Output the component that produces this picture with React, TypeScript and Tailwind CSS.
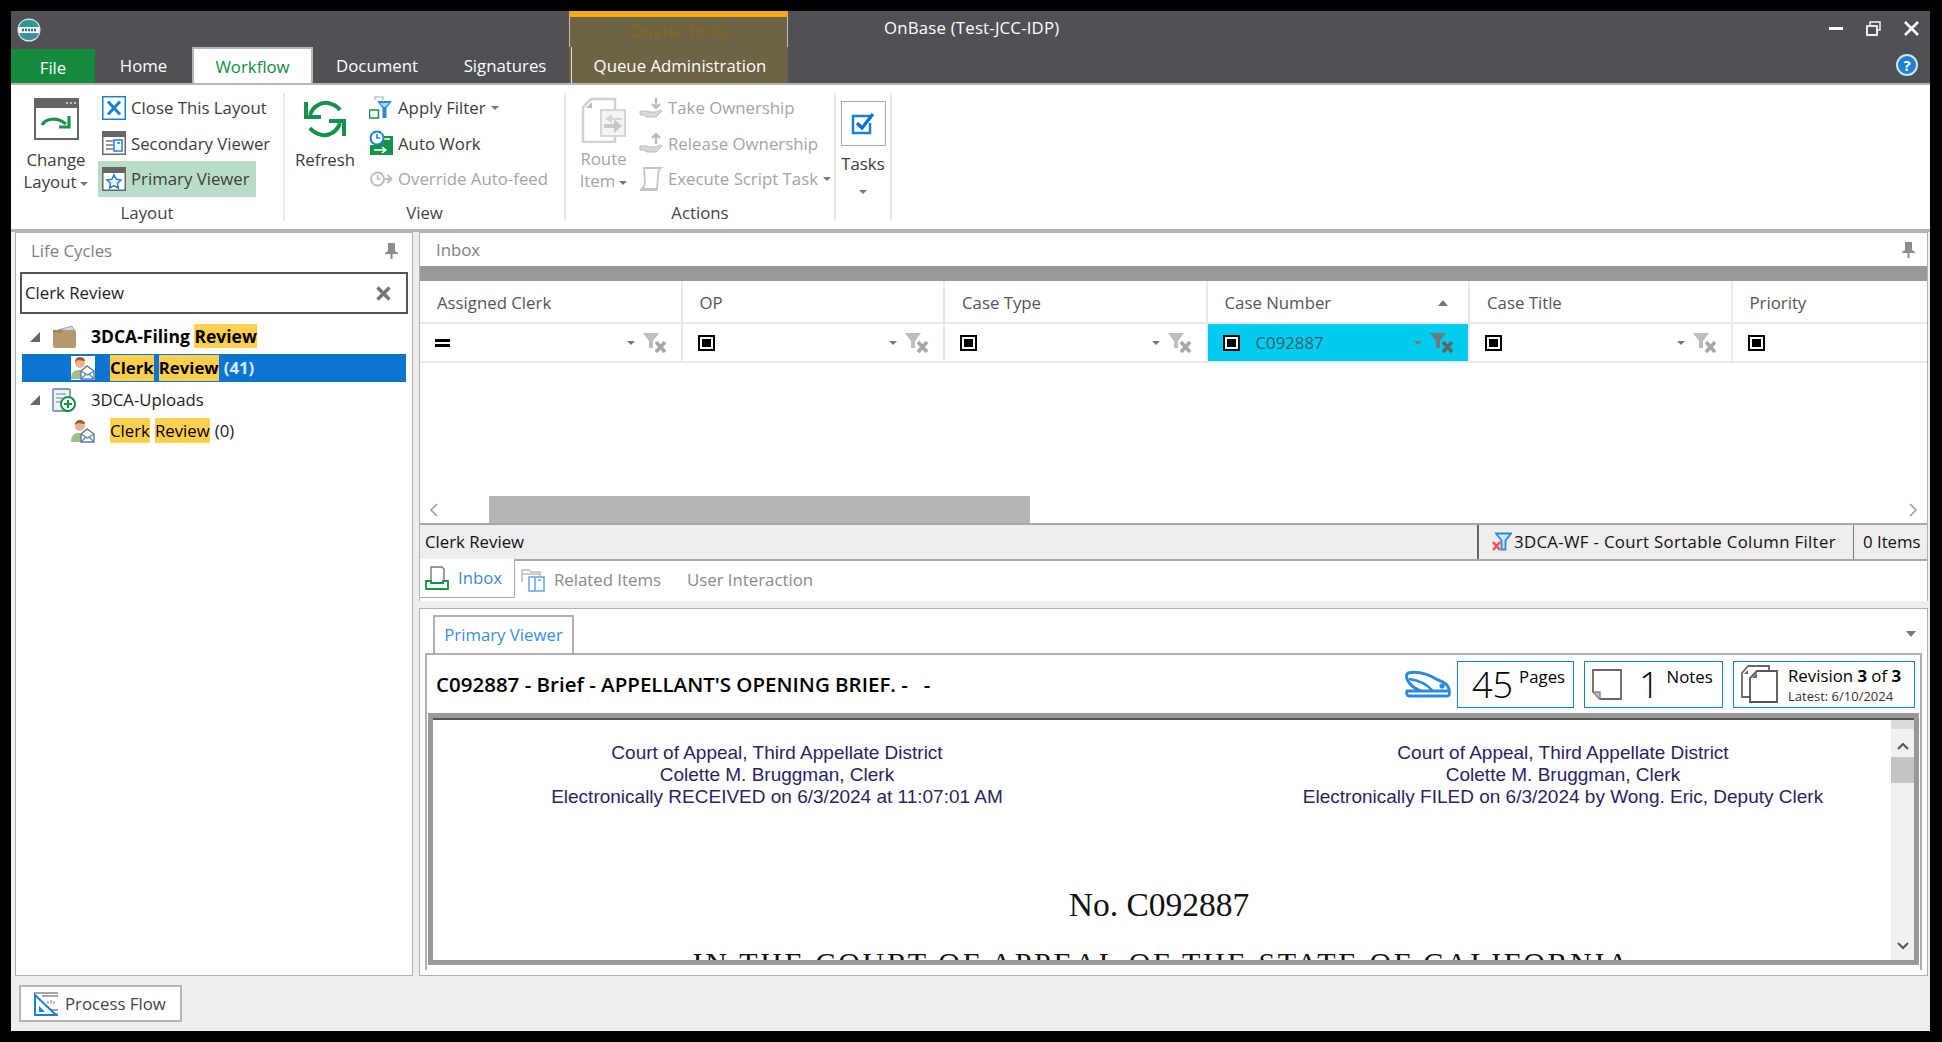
import type { ReactNode } from "react";

const ui = "font-['Open_Sans','Noto_Sans',sans-serif]";

function Caret({ className = "" }: { className?: string }) {
  return <span className={`inline-block w-0 h-0 border-x-[4px] border-x-transparent border-t-[4px] border-t-[#777] ${className}`} />;
}

function Logo() {
  return (
    <svg width="24" height="26" viewBox="0 0 24 26">
      <circle cx="12" cy="13" r="11.5" fill="#dfe9e6" />
      <path d="M2 10a10.5 10.5 0 0 1 20 0z" fill="#2e9c8c" />
      <path d="M2 16a10.5 10.5 0 0 0 20 0z" fill="#3f8f9f" />
      <rect x="2" y="10" width="20" height="6" fill="#f5f7f6" />
      <path d="M5 13h14" stroke="#2a6f86" strokeWidth="2.4" strokeDasharray="2 1" />
    </svg>
  );
}

function ChangeLayoutIcon() {
  return (
    <svg width="45" height="42" viewBox="0 0 45 42">
      <rect x="1" y="1" width="43" height="40" fill="#fff" stroke="#666" strokeWidth="2" />
      <rect x="1" y="1" width="43" height="9" fill="#666" />
      <path d="M32 5h2M36 5h2M40 5h2" stroke="#ddd" strokeWidth="1.5" />
      <path d="M8 27c4-7 15-8 24-1" fill="none" stroke="#17924a" strokeWidth="3.2" />
      <path d="M35 18v11H25" fill="none" stroke="#17924a" strokeWidth="3.2" />
    </svg>
  );
}

function CloseLayoutIcon() {
  return (
    <svg width="24" height="24" viewBox="0 0 24 24">
      <rect x="0.75" y="0.75" width="22.5" height="22.5" fill="#fff" stroke="#1a7fd6" strokeWidth="1.5" />
      <path d="M6 5.5l12 13M18 5.5l-12 13" stroke="#1a7fd6" strokeWidth="3" />
    </svg>
  );
}

function SecondaryIcon() {
  return (
    <svg width="24" height="24" viewBox="0 0 24 24">
      <rect x="0.75" y="0.75" width="22.5" height="22.5" fill="#fff" stroke="#666" strokeWidth="1.5" />
      <rect x="1" y="1" width="22" height="5" fill="#666" />
      <path d="M4 10h7M4 14h7M4 18h7" stroke="#999" strokeWidth="2" />
      <rect x="12" y="9" width="8" height="11" fill="#fff" stroke="#1a7fd6" strokeWidth="1.5" />
      <path d="M15 12h3" stroke="#1a7fd6" strokeWidth="1.5" />
    </svg>
  );
}

function PrimaryIcon() {
  return (
    <svg width="24" height="24" viewBox="0 0 24 24">
      <rect x="0.75" y="0.75" width="22.5" height="22.5" fill="#fff" stroke="#666" strokeWidth="1.5" />
      <rect x="1" y="1" width="22" height="5" fill="#666" />
      <path d="M12 8l2.2 4.3 4.8.7-3.5 3.3.9 4.7L12 18.700 7.600 21l.9-4.700L5 13l4.800-.7z" fill="#fff" stroke="#1a7fd6" strokeWidth="1.5" />
    </svg>
  );
}

function RefreshIcon() {
  return (
    <svg width="44" height="42" viewBox="0 0 44 42">
      <path d="M7 17C10 8 18 4 25 5c5 1 9 3 12 7" fill="none" stroke="#17924a" strokeWidth="4" />
      <path d="M3 4v15h15" fill="none" stroke="#17924a" strokeWidth="4" />
      <path d="M37 25c-3 9-11 13-18 12-5-1-9-3-12-7" fill="none" stroke="#17924a" strokeWidth="4" />
      <path d="M41 38V23H26" fill="none" stroke="#17924a" strokeWidth="4" />
    </svg>
  );
}

function ApplyFilterIcon() {
  return (
    <svg width="24" height="24" viewBox="0 0 24 24">
      <path d="M6 4V1h8v3" fill="none" stroke="#aaa" strokeWidth="1.200" />
      <rect x="0.500" y="14" width="9" height="8" fill="none" stroke="#17924a" strokeWidth="1.500" />
      <path d="M8 5h15l-5.500 7v10h-4V12z" fill="#2a8ade" />
      <path d="M11 7h9l-3.500 4h-2z" fill="#a9d3f5" />
    </svg>
  );
}

function AutoWorkIcon() {
  return (
    <svg width="24" height="26" viewBox="0 0 24 26">
      <rect x="10" y="6" width="14" height="10" fill="#17924a" />
      <rect x="1" y="15" width="23" height="10" fill="#17924a" />
      <path d="M5 20h12M13 17l4 3-4 3M15 9h6" stroke="#fff" strokeWidth="1.500" fill="none" />
      <circle cx="8" cy="8" r="6.500" fill="#fff" stroke="#1a7fd6" strokeWidth="2" />
      <path d="M8 4v4h3" stroke="#1a7fd6" strokeWidth="1.500" fill="none" />
    </svg>
  );
}

function OverrideIcon() {
  return (
    <svg width="24" height="24" viewBox="0 0 24 24">
      <circle cx="8.500" cy="12" r="6.500" fill="#fff" stroke="#bdbdbd" strokeWidth="2" />
      <path d="M8.500 8v4h3" stroke="#bdbdbd" strokeWidth="1.500" fill="none" />
      <path d="M16 12h5M18.500 8l4 4-4 4" stroke="#bdbdbd" strokeWidth="2" fill="none" />
    </svg>
  );
}

function RouteIcon() {
  return (
    <svg width="45" height="46" viewBox="0 0 45 46">
      <path d="M10 2h24v43H2V10z" fill="#fff" stroke="#d0d0d0" strokeWidth="2.500" />
      <path d="M5 11l6-6v6z" fill="#bbb" />
      <rect x="20" y="13" width="24" height="26" fill="#f4f4f4" stroke="#d6d6d6" strokeWidth="2" />
      <path d="M23 27h10v-5l8 7-8 7v-5H23z" fill="#c8c8c8" />
      <path d="M41 21H31v-4l-7 5 7 4v-3h10z" fill="#d4d4d4" />
    </svg>
  );
}

function HandIcon({ up }: { up?: boolean }) {
  return (
    <svg width="24" height="24" viewBox="0 0 24 24">
      <path d="M1 15h6l4 1h6l4-2 2 1-6 6H8l-3-2H1z" fill="#d8d8d8" stroke="#bdbdbd" />
      <path d={up ? "M17 13V4M13 7l4-4 4 4" : "M17 2v10M13 8l4 4 4-4"} stroke="#bdbdbd" strokeWidth="2.400" fill="none" />
    </svg>
  );
}

function ScriptIcon() {
  return (
    <svg width="24" height="26" viewBox="0 0 24 26">
      <path d="M5 2h17c-3 2-3 5-3 8l-1 13H3c2-2 3-4 3-7z" fill="#fff" stroke="#c4c4c4" strokeWidth="1.800" />
      <path d="M1 24h17" stroke="#c4c4c4" strokeWidth="2" />
    </svg>
  );
}

function TasksIcon() {
  return (
    <svg width="24" height="24" viewBox="0 0 24 24">
      <path d="M19 11v10H2V4h17" fill="none" stroke="#1a7fd6" strokeWidth="2.500" />
      <path d="M6 11l5 5 11-14" fill="none" stroke="#0f6fc4" strokeWidth="3.200" />
    </svg>
  );
}

function PinIcon() {
  return (
    <svg width="13" height="16" viewBox="0 0 13 16">
      <path d="M3 0h7v8l3 2v1H0v-1l3-2z" fill="#8c8c8c" />
      <rect x="5.500" y="11" width="2" height="5" fill="#8c8c8c" />
    </svg>
  );
}

function FolderIcon() {
  return (
    <svg width="25" height="24" viewBox="0 0 25 24">
      <path d="M6 5l14-4 3 5z" fill="#cfd8e6" stroke="#8fa5c0" />
      <rect x="1" y="5" width="23" height="18" rx="2" fill="#b49a6a" />
      <rect x="1" y="5" width="9" height="3" fill="#a08656" />
    </svg>
  );
}

function ClerkIcon({ solid }: { solid?: boolean }) {
  return (
    <svg width="24" height="24" viewBox="0 0 24 24">
      {solid && <rect width="24" height="24" fill="#fff" />}
      <path d="M0 23c0-6 3-9 7-9s6 2 7 5l-3 4z" fill="#9fc089" />
      <circle cx="9" cy="7" r="5" fill="#e8b48e" />
      <path d="M4 6c0-4 3-5 5-5s5 1 5 4c-3 0-6-1-7-1z" fill="#a5552e" />
      <path d="M10 15l6-5 7 5v8H10z" fill="#fff" stroke="#5d7d99" strokeWidth="1.400" />
      <path d="M10 15l6.500 4 6.500-4M10 23l5-5M23 23l-5-5" fill="none" stroke="#5d7d99" strokeWidth="1.200" />
    </svg>
  );
}

function UploadsIcon() {
  return (
    <svg width="24" height="24" viewBox="0 0 24 24">
      <rect x="1" y="1" width="17" height="22" rx="1" fill="#eef3f8" stroke="#5d7d99" strokeWidth="1.400" />
      <path d="M4 6h10M4 10h6M4 14h5" stroke="#9ab" strokeWidth="1.300" />
      <circle cx="16" cy="16" r="7" fill="#fff" stroke="#17924a" strokeWidth="2" />
      <path d="M16 12v8M12 16h8" stroke="#17924a" strokeWidth="2.200" />
    </svg>
  );
}

function FunnelClear({ dark }: { dark?: boolean }) {
  const c = dark ? "#6e7a80" : "#bdbdbd";
  const x = dark ? "#5c666b" : "#a8a8a8";
  return (
    <svg width="25" height="22" viewBox="0 0 25 22">
      <path d="M0 1h16l-6 8v7H6V9z" fill={c} />
      <path d="M13 10l9 10M22 10l-9 10" stroke={x} strokeWidth="3.600" />
    </svg>
  );
}

function FilterBox() {
  return (
    <span className="block w-[17px] h-[16px] border-2 border-black p-[2px] bg-white">
      <span className="block w-full h-full bg-black" />
    </span>
  );
}

function RedFunnelIcon() {
  return (
    <svg width="20" height="20" viewBox="0 0 20 20">
      <path d="M4 1.500h15l-5.500 7v9h-4v-9z" fill="#cfe6fa" stroke="#2a8ade" strokeWidth="1.800" />
      <path d="M1 10l7 8M8 10l-7 8" stroke="#ef5350" strokeWidth="2.600" />
    </svg>
  );
}

function InboxIcon() {
  return (
    <svg width="24" height="24" viewBox="0 0 24 24">
      <path d="M6 15V1h11l2 2v12" fill="#fff" stroke="#777" strokeWidth="1.400" />
      <path d="M1 15h5v2h12v-2h5v8H1z" fill="#fff" stroke="#17924a" strokeWidth="1.800" />
    </svg>
  );
}

function RelatedIcon() {
  return (
    <svg width="24" height="24" viewBox="0 0 24 24">
      <path d="M1 14V2h7l2 2h9v4" fill="none" stroke="#bbb" strokeWidth="1.500" />
      <rect x="1" y="5" width="17" height="2" fill="#ccc" />
      <rect x="8" y="9" width="15" height="14" fill="#fff" stroke="#5da7e6" strokeWidth="1.500" />
      <path d="M14 9v14M17 12h3" stroke="#5da7e6" strokeWidth="1.500" />
    </svg>
  );
}

function StaplerIcon() {
  return (
    <svg width="46" height="28" viewBox="0 0 46 28">
      <path d="M3 3c9-2 20 1 30 7 6 2 10 5 11 9v3H18C10 19 5 15 3 11c-2-3-2-7 0-8z" fill="#fff" stroke="#2a8ade" strokeWidth="3" />
      <path d="M4 9c8 1 18 5 24 12" fill="none" stroke="#2a8ade" strokeWidth="2.400" />
      <path d="M2 21h42c1 4 0 5-2 5H4c-2 0-3-3-2-5z" fill="#fff" stroke="#2a8ade" strokeWidth="2.800" />
      <circle cx="37" cy="16" r="2.600" fill="#2a8ade" />
    </svg>
  );
}

function NoteIcon() {
  return (
    <svg width="30" height="31" viewBox="0 0 30 31">
      <path d="M1 1h28v29H8l-7-7z" fill="#fff" stroke="#666" strokeWidth="1.800" />
      <path d="M1 23h7v7" fill="#bbb" stroke="#888" strokeWidth="1.400" />
    </svg>
  );
}

function RevisionIcon() {
  return (
    <svg width="37" height="38" viewBox="0 0 37 38">
      <path d="M7 1h21v8M7 1L1 8v24h8" fill="#fff" stroke="#666" strokeWidth="1.800" />
      <path d="M16 6h20v31H9V13z" fill="#fff" stroke="#555" strokeWidth="1.800" />
      <path d="M11 13l5-5v5zM3 9l4-4v4z" fill="#666" />
    </svg>
  );
}

function ProcessFlowIcon() {
  return (
    <svg width="24" height="24" viewBox="0 0 24 24">
      <path d="M0 1h24M8 4h16M16 18h8M20 22h4" stroke="#888" strokeWidth="1.300" />
      <path d="M14 12v-3M17 12V8M20 12V9" stroke="#999" strokeWidth="1.300" />
      <path d="M1 3l21 20H1z" fill="#fff" stroke="#1a7fd6" strokeWidth="2" />
      <path d="M5 14l6 6H5z" fill="#1a7fd6" />
    </svg>
  );
}

function ChevronUp() {
  return (
    <svg width="12" height="8" viewBox="0 0 12 8">
      <path d="M1 7l5-5 5 5" fill="none" stroke="#555" strokeWidth="2" />
    </svg>
  );
}

function ChevronDown() {
  return (
    <svg width="12" height="8" viewBox="0 0 12 8">
      <path d="M1 1l5 5 5-5" fill="none" stroke="#555" strokeWidth="2" />
    </svg>
  );
}

function Hl({ children }: { children: ReactNode }) {
  return <span className="bg-[#ffcf4d] text-black">{children}</span>;
}

function Sep() {
  return <div className="w-[2px] h-[128px] mt-[3px] bg-[#e9e9e9] shrink-0" />;
}

function SmallButton({ icon, label, gray, caret, active }: { icon: ReactNode; label: string; gray?: boolean; caret?: boolean; active?: boolean }) {
  return (
    <div className={`h-[35.500px] pl-[4px] flex items-center whitespace-nowrap ${active ? "bg-[#b9dcc6] w-[158px]" : ""} ${gray ? "text-[#a4a4a4]" : "text-[#3c3c3c]"}`}>
      <span className="w-[24px] flex justify-center mr-[5px]">{icon}</span>
      {label}
      {caret && <Caret className="ml-[5px]" />}
    </div>
  );
}

function Group({ width, label, children }: { width: string; label: string; children: ReactNode }) {
  return (
    <div className={`${width} h-[134px] shrink-0 flex flex-col`}>
      <div className="flex-1 flex">{children}</div>
      <div className="h-[22px] leading-[22px] text-center text-[#444]">{label}</div>
    </div>
  );
}

const columns = ["Assigned Clerk", "OP", "Case Type", "Case Number", "Case Title", "Priority"];

function FilterCell({ index }: { index: number }) {
  const active = index === 3;
  const last = index === 5;
  return (
    <div className={`h-full flex items-center pl-[15px] pr-[13px] ${last ? "flex-1" : "w-[262.500px] border-r-2 border-[#e8e8e8]"} ${active ? "bg-[#00ccf0]" : ""}`}>
      {index === 0 ? <span className="block w-[15px] h-[8px] border-y-[3px] border-black" /> : <FilterBox />}
      {active && <span className="ml-[16px] text-[#40606c]">C092887</span>}
      {!last && (
        <span className="ml-auto flex items-center gap-[8px]">
          <Caret />
          <FunnelClear dark={active} />
        </span>
      )}
    </div>
  );
}

function StampBlock({ width, second }: { width: string; second: string }) {
  return (
    <div className={`${width} shrink-0 text-center`}>
      <div>Court of Appeal, Third Appellate District</div>
      <div>Colette M. Bruggman, Clerk</div>
      <div>{second}</div>
    </div>
  );
}

export default function App() {
  return (
    <div className={`${ui} w-[1942px] h-[1042px] bg-black pt-[11px] pb-[11px] pl-[11px] pr-[12px] text-[16.800px] overflow-hidden`}>
      <div className="w-full h-full bg-[#eeeeee] flex flex-col overflow-hidden">
        {/* Title bar */}
        <div className="h-[72px] shrink-0 bg-[#505155] flex text-white text-[16.800px]">
          <div className="w-[558px] flex flex-col shrink-0">
            <div className="h-[36px] pl-[6px] pt-[6px]">
              <Logo />
            </div>
            <div className="h-[36px] flex items-end">
              <div className="w-[84px] h-[34px] bg-[#168a3c] flex items-center justify-center pt-[3px]">File</div>
              <div className="w-[97px] h-full flex items-center justify-center pt-[2px]">Home</div>
              <div className="w-[121px] h-full bg-white border-2 border-b-0 border-[#b5b5b5] text-[#128a45] flex items-center justify-center pt-[2px]">Workflow</div>
              <div className="w-[128px] h-full flex items-center justify-center pt-[2px]">Document</div>
              <div className="w-[108px] ml-[10px] h-full flex items-center justify-center pt-[2px]">Signatures</div>
            </div>
          </div>
          <div className="w-[219px] shrink-0 bg-[#6e6344] border-t-[6px] border-[#f2ac1c] flex flex-col">
            <div className="h-[30px] pb-[2px] flex items-center justify-center text-[#86681f] border-x border-[#c9bfa3]">Queue Tools</div>
            <div className="h-[36px] flex items-center justify-center pt-[2px] ml-[2px] border-l border-[#e8e3d2]">Queue Administration</div>
          </div>
          <div className="flex-1 flex flex-col">
            <div className="h-[36px] flex">
              <div className="pl-[96px] pt-[4px] tracking-[0.2px]">OnBase (Test-JCC-IDP)</div>
              <div className="ml-auto flex items-center gap-[23px] pr-[11px] pb-[2px]">
                <span className="block w-[14px] h-[3px] bg-white" />
                <svg width="15" height="15" viewBox="0 0 15 15">
                  <rect x="4" y="1" width="10" height="8" fill="none" stroke="#fff" strokeWidth="1.400" />
                  <rect x="1" y="5" width="10" height="9" fill="#505155" stroke="#fff" strokeWidth="1.800" />
                </svg>
                <svg width="15" height="15" viewBox="0 0 15 15">
                  <path d="M1 1l13 13M14 1L1 14" stroke="#fff" strokeWidth="2.600" />
                </svg>
              </div>
            </div>
            <div className="flex-1 flex justify-end pr-[12px] pt-[7px]">
              <span className="w-[22px] h-[22px] rounded-full bg-[#1f7fd0] border-2 border-[#cfe4f7] flex items-center justify-center text-[15px] font-bold leading-none">?</span>
            </div>
          </div>
        </div>

        {/* Ribbon */}
        <div className="h-[149px] shrink-0 bg-white border-t-[2px] border-b-[3px] border-[#b5b5b5] pt-[5px] flex">
          <Group width="w-[272px]" label="Layout">
            <div className="w-[87px] pl-[3px] pt-[8px] flex flex-col items-center text-[#3c3c3c] leading-[21px]">
              <ChangeLayoutIcon />
              <div className="mt-[9px]">Change</div>
              <div className="flex items-center mt-px">Layout<Caret className="ml-[4px] mt-[4px]" /></div>
            </div>
            <div className="flex flex-col">
              <SmallButton icon={<CloseLayoutIcon />} label="Close This Layout" />
              <SmallButton icon={<SecondaryIcon />} label="Secondary Viewer" />
              <SmallButton icon={<PrimaryIcon />} label="Primary Viewer" active />
            </div>
          </Group>
          <Sep />
          <Group width="w-[279px]" label="View">
            <div className="w-[80px] pt-[8px] flex flex-col items-center text-[#3c3c3c]">
              <RefreshIcon />
              <div className="mt-[7px]">Refresh</div>
            </div>
            <div className="flex flex-col">
              <SmallButton icon={<ApplyFilterIcon />} label="Apply Filter" caret />
              <SmallButton icon={<AutoWorkIcon />} label="Auto Work" />
              <SmallButton icon={<OverrideIcon />} label="Override Auto-feed" gray />
            </div>
          </Group>
          <Sep />
          <Group width="w-[268px]" label="Actions">
            <div className="w-[69px] pl-[6px] pt-[7px] flex flex-col items-center text-[#a4a4a4] leading-[21px]">
              <RouteIcon />
              <div className="mt-[5px]">Route</div>
              <div className="flex items-center mt-px">Item<Caret className="ml-[4px] mt-[4px]" /></div>
            </div>
            <div className="flex flex-col">
              <SmallButton icon={<HandIcon />} label="Take Ownership" gray />
              <SmallButton icon={<HandIcon up />} label="Release Ownership" gray />
              <SmallButton icon={<ScriptIcon />} label="Execute Script Task" gray caret />
            </div>
          </Group>
          <Sep />
          <div className="w-[54px] shrink-0 flex flex-col items-center pt-[11px] text-[#3c3c3c]">
            <div className="w-[45px] h-[45px] border border-[#a8a8a8] flex items-center justify-center"><TasksIcon /></div>
            <div className="mt-[5px]">Tasks</div>
            <Caret className="mt-[14px]" />
          </div>
          <Sep />
        </div>

        {/* Panels */}
        <div className="h-[744px] shrink-0 flex pl-[4px] pr-[2px] gap-[6px]">
          {/* Life Cycles */}
          <div className="w-[398px] shrink-0 bg-white border border-[#b0b0b0] flex flex-col">
            <div className="h-[39px] pb-[4px] flex items-center justify-between pl-[15px] pr-[14px] text-[#808080]">
              Life Cycles
              <PinIcon />
            </div>
            <div className="mx-[4px] h-[42px] border-2 border-[#555] flex items-center justify-between pl-[3px] pr-[15px] text-[#222]">
              Clerk Review
              <svg width="15" height="15" viewBox="0 0 15 15">
                <path d="M1.500 1.500l12 12M13.500 1.500l-12 12" stroke="#777" strokeWidth="3.400" />
              </svg>
            </div>
            <div className="pt-[7px] px-[6px] text-[#222]">
              <div className="h-[31px] flex items-center">
                <span className="ml-[8px] mr-[12px] w-0 h-0 border-b-[10px] border-b-[#666] border-l-[10px] border-l-transparent" />
                <FolderIcon />
                <span className="ml-[14px] font-bold text-black text-[17.500px]">3DCA-Filing <Hl>Review</Hl></span>
              </div>
              <div className="h-[28px] mt-[2px] bg-[#0c74d1] flex items-center font-bold text-[#d9eaf7]">
                <span className="ml-[49px]"><ClerkIcon solid /></span>
                <span className="ml-[15px] flex gap-[5px]"><Hl>Clerk</Hl><Hl>Review</Hl></span>
                <span className="ml-[5px]">(41)</span>
              </div>
              <div className="h-[31px] mt-[2px] flex items-center">
                <span className="ml-[8px] mr-[12px] w-0 h-0 border-b-[10px] border-b-[#666] border-l-[10px] border-l-transparent" />
                <UploadsIcon />
                <span className="ml-[15px]">3DCA-Uploads</span>
              </div>
              <div className="h-[31px] flex items-center">
                <span className="ml-[49px]"><ClerkIcon /></span>
                <span className="ml-[15px] flex gap-[5px]"><Hl>Clerk</Hl><Hl>Review</Hl></span>
                <span className="ml-[5px]">(0)</span>
              </div>
            </div>
          </div>

          {/* Right column */}
          <div className="flex-1 min-w-0 flex flex-col">
            {/* Inbox */}
            <div className="h-[369px] shrink-0 bg-white border-x border-t border-[#b0b0b0] flex flex-col">
              <div className="h-[33px] shrink-0 flex items-center justify-between pl-[16px] pr-[12px] text-[#808080]">
                Inbox
                <PinIcon />
              </div>
              <div className="h-[15px] shrink-0 bg-[#98999b]" />
              <div className="h-[43px] shrink-0 flex border-b-2 border-[#e8e8e8] text-[#555]">
                {columns.map((c, i) => (
                  <div key={c} className={`h-full flex items-center pl-[17px] pr-[20px] pt-[3px] ${i === 5 ? "flex-1" : "w-[262.500px] border-r-2 border-[#e8e8e8]"}`}>
                    {c}
                    {i === 3 && <span className="ml-auto w-0 h-0 border-x-[5px] border-x-transparent border-b-[6px] border-b-[#777]" />}
                  </div>
                ))}
              </div>
              <div className="h-[39px] shrink-0 flex border-b-2 border-[#e8e8e8]">
                {columns.map((c, i) => (
                  <FilterCell key={c} index={i} />
                ))}
              </div>
              <div className="flex-1" />
              <div className="h-[27px] shrink-0 flex items-center">
                <div className="w-[69px] pl-[9px]">
                  <svg width="10" height="14" viewBox="0 0 10 14"><path d="M8 1L2 7l6 6" fill="none" stroke="#999" strokeWidth="1.500" /></svg>
                </div>
                <div className="w-[541px] h-full bg-[#b5b5b7]" />
                <div className="flex-1 flex justify-end pr-[9px]">
                  <svg width="10" height="14" viewBox="0 0 10 14"><path d="M2 1l6 6-6 6" fill="none" stroke="#999" strokeWidth="1.500" /></svg>
                </div>
              </div>
              <div className="h-[38px] shrink-0 flex items-stretch border-y-2 border-[#a8a8a8] bg-[#eeeeee] text-[#111]">
                <div className="flex-1 flex items-center pl-[5px]">Clerk Review</div>
                <div className="w-[376px] border-l-2 border-[#666] flex items-center pl-[13px] gap-[2px] whitespace-nowrap tracking-[0.330px]"><RedFunnelIcon />3DCA-WF - Court Sortable Column Filter</div>
                <div className="w-[74px] border-l border-[#777] flex items-center pl-[9px] whitespace-nowrap">0 Items</div>
              </div>
              <div className="h-[37px] shrink-0 flex">
                <div className="w-[95px] -mt-[2px] bg-white border-r border-b border-[#a8a8a8] flex items-center pl-[5px] gap-[9px] text-[#3b8ad0]">
                  <InboxIcon />Inbox
                </div>
                <div className="flex items-center pl-[6px] gap-[9px] text-[#8a8a8a]">
                  <RelatedIcon />Related Items
                  <span className="ml-[17px]">User Interaction</span>
                </div>
              </div>
              <div className="h-[3px] shrink-0" />
            </div>
            <div className="h-[7px] shrink-0" />

            {/* Primary Viewer */}
            <div className="flex-1 min-h-0 bg-white border border-[#b0b0b0] flex flex-col px-[5px] pb-[5px]">
              <div className="h-[44px] shrink-0 flex items-end pl-[8px] justify-between pr-[4px]">
                <div className="w-[141px] h-[38px] border-2 border-b-0 border-[#b0b0b0] text-[#3a8fdd] flex items-center justify-center">Primary Viewer</div>
                <span className="mb-[16px] mr-[2px] w-0 h-0 border-x-[5px] border-x-transparent border-t-[6px] border-t-[#777]" />
              </div>
              <div className="flex-1 min-h-0 border-2 border-[#b0b0b0] border-b-0 flex flex-col">
                <div className="h-[58px] shrink-0 flex items-center pl-[9px] pr-[5px]">
                  <span className="font-semibold text-black text-[20.500px] whitespace-nowrap pt-px">C092887 - Brief - APPELLANT'S OPENING BRIEF. -&nbsp;&nbsp;&nbsp;-</span>
                  <span className="ml-auto"><StaplerIcon /></span>
                  <div className="ml-[6px] w-[117px] h-[47px] border-[1.500px] border-[#1a7fd6] flex items-start pl-[14px] text-black">
                    <span className="text-[36px] leading-[45px] font-light">45</span>
                    <span className="ml-[6px] mt-[2px]">Pages</span>
                  </div>
                  <div className="ml-[10px] w-[139px] h-[47px] border-[1.500px] border-[#1a7fd6] flex items-start pl-[7px] text-black">
                    <span className="mt-[7px]"><NoteIcon /></span>
                    <span className="ml-[17px] text-[36px] leading-[45px] font-light">1</span>
                    <span className="ml-[7px] mt-[2px]">Notes</span>
                  </div>
                  <div className="ml-[10px] w-[182px] h-[47px] border-[1.500px] border-[#1a7fd6] flex items-center pl-[7px] text-black">
                    <RevisionIcon />
                    <div className="ml-[10px] flex flex-col whitespace-nowrap">
                      <span className="leading-[24px]">Revision <b>3</b> of <b>3</b></span>
                      <span className="text-[13px] leading-[17px] text-[#333]">Latest: 6/10/2024</span>
                    </div>
                  </div>
                </div>
                <div className="flex-1 min-h-0 mx-px mb-[5px] border-[5px] border-[#999] flex overflow-hidden bg-white">
                  <div className="flex-1 min-w-0 overflow-hidden">
                    <div className="border-t-2 border-[#555]" />
                    <div className="flex pt-[22px] font-['Liberation_Sans',Arial,sans-serif] text-[19px] leading-[22px] text-[#2e1f5e] whitespace-nowrap">
                      <StampBlock width="w-[688px]" second="Electronically RECEIVED on 6/3/2024 at 11:07:01 AM" />
                      <StampBlock width="w-[884px]" second="Electronically FILED on 6/3/2024 by Wong. Eric, Deputy Clerk" />
                    </div>
                    <div className="mt-[75px] text-center font-['Liberation_Serif',serif] text-[33.500px] leading-[44px] text-[#111] pr-[6px]">No. C092887</div>
                    <div className="mt-[19px] text-center font-['Liberation_Serif',serif] text-[30px] leading-[34px] text-[#111] tracking-[2.650px] whitespace-nowrap">IN THE COURT OF APPEAL OF THE STATE OF CALIFORNIA</div>
                  </div>
                  <div className="w-[23px] shrink-0 bg-[#f0f0f0] flex flex-col items-center">
                    <div className="h-[11px] w-full bg-[#dcdcdc] border-t-2 border-[#555]" />
                    <div className="pt-[13px] pb-[7px]"><ChevronUp /></div>
                    <div className="h-[26px] w-full bg-[#c4c4c4]" />
                    <div className="mt-auto pb-[10px]"><ChevronDown /></div>
                  </div>
                </div>
              </div>
            </div>
          </div>
        </div>

        {/* Footer */}
        <div className="flex-1 pt-[9px] pl-[8px]">
          <div className="w-[163px] h-[37px] bg-white border-2 border-[#b5b5b5] flex items-center pl-[13px] gap-[7px] text-[#444]">
            <ProcessFlowIcon />Process Flow
          </div>
        </div>
      </div>
    </div>
  );
}
